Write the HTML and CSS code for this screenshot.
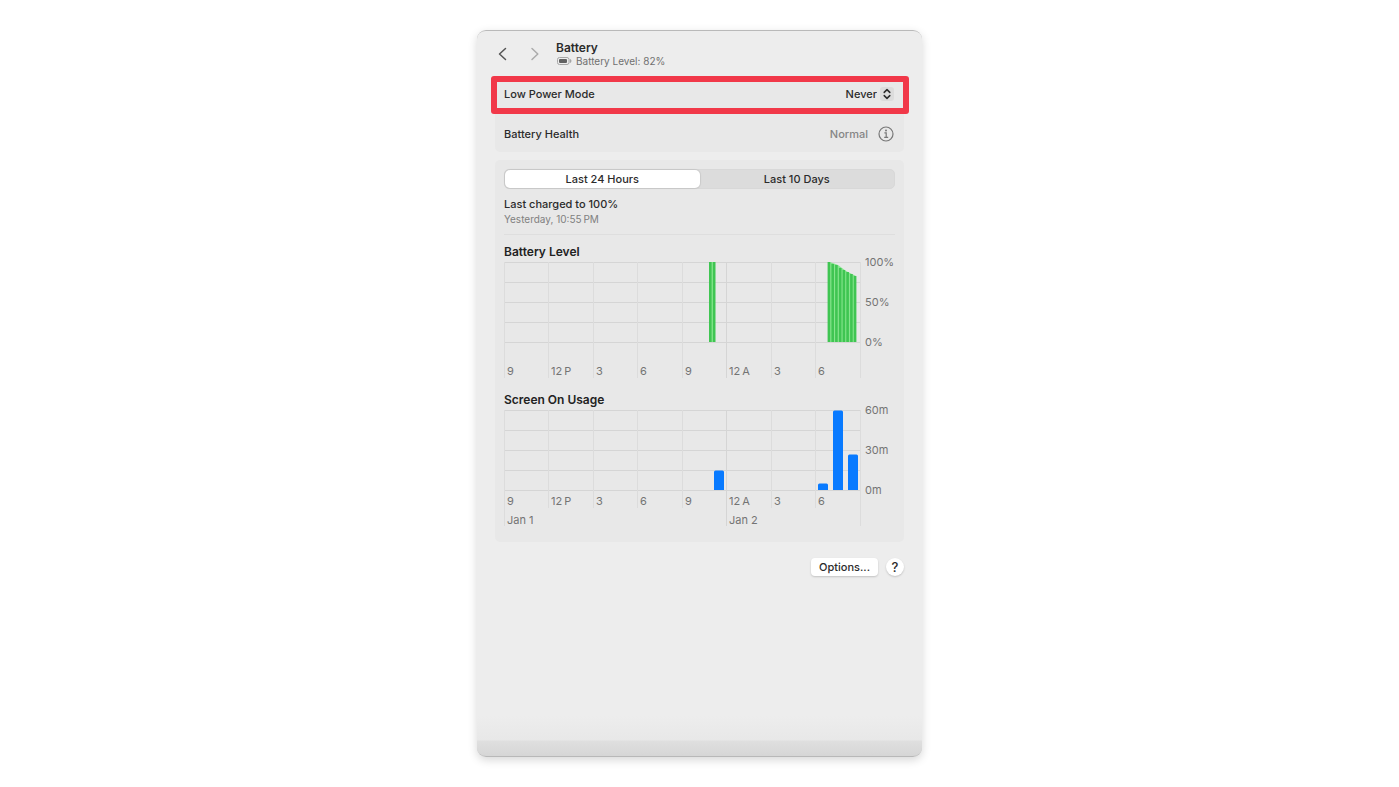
FILE: index.html
```html
<!DOCTYPE html>
<html lang="en">
<head>
<meta charset="utf-8">
<meta name="viewport" content="width=device-width, initial-scale=1">
<title>Battery</title>
<link rel="stylesheet" href="styles.css">
</head>
<body>
<main class="window">
  <header class="header">
    <button class="nav" type="button" aria-label="Back"><svg width="10" height="14" viewBox="0 0 10 14"><path d="M7.500 1.500 1.500 7 7.500 12.500"/></svg></button>
    <button class="nav nav-off" type="button" aria-label="Forward" disabled><svg width="10" height="14" viewBox="0 0 10 14"><path d="M2 1.5 7.8 7 2 12.5"/></svg></button>
    <div class="heading">
      <h1 class="title">Battery</h1>
      <p class="status">
        <svg width="15" height="8" viewBox="0 0 15 8" aria-hidden="true"><rect x=".5" y=".5" width="11.5" height="7" rx="2" fill="none" stroke="#a6a6a6"/><rect x="2" y="2" width="8" height="4" rx="1" fill="#626262"/><path d="M12.800 1.800c2.200.8 2.200 3.600 0 4.400z" fill="#a6a6a6"/></svg>
        <span>Battery Level: 82%</span>
      </p>
    </div>
  </header>

  <section class="card settings">
    <div class="row marked">
      <label for="mode">Low Power Mode</label>
      <span class="picker">
        <select id="mode" class="select"><option>Never</option><option>Always</option></select>
        <svg class="stepper" width="14" height="14" viewBox="0 0 14 14" aria-hidden="true"><rect width="14" height="14" rx="3"/><path d="M4.2 5.4 7 2.6l2.8 2.8M4.2 8.6 7 11.4l2.8-2.8"/></svg>
      </span>
    </div>
    <div class="row">
      <span>Battery Health</span>
      <span class="health">Normal
        <button class="info" type="button" aria-label="Battery health details"><svg width="16" height="16" viewBox="0 0 16 16"><circle cx="8" cy="8" r="7"/><path d="M6.4 6.9h1.8v4.3M6.2 11.3h4"/><circle class="dot" cx="8" cy="4.5" r="1"/></svg></button>
      </span>
    </div>
  </section>

  <section class="card usage">
    <div class="segments">
      <button class="segment segment-on" type="button">Last 24 Hours</button>
      <button class="segment" type="button">Last 10 Days</button>
    </div>
    <div class="charge">
      <p>Last charged to 100%</p>
      <p class="when">Yesterday, 10:55&#8239;PM</p>
    </div>

    <h2 class="chart-title">Battery Level</h2>
    <svg class="chart" viewBox="0 2 391 120" role="img" aria-label="Battery level over the last 24 hours">
      <path class="grid" d="M0 5.5h357M0 25.5h357M0 45.5h357M0 65.5h357M0 85.5h357"/>
      <path class="grid" d="M222.5 5v116"/>
      <path class="grid faint" d="M.5 5v116M44.5 5v116M89.5 5v116M133.5 5v116M178.5 5v116M267.5 5v116M311.5 5v116M356.5 5v116"/>
      <path class="level-back" d="M205 5h6v80h-6zM324 5h2l8 3 8 6 10 5v66h-28z"/>
      <path class="level" d="M205 5h2.6v80H205zM208.9 5h2.6v80h-2.6zM323.6 5h2.6v80h-2.6zM327.4 7h2.6v78h-2.6zM331.1 8h2.6v77h-2.6zM334.9 11h2.6v74h-2.6zM338.6 13h2.6v72h-2.6zM342.3 15h2.6v70h-2.6zM346.1 17h2.6v68h-2.6zM349.8 19h2.6v66h-2.6z"/>
      <g class="axis">
        <text x="361" y="9">100%</text><text x="361" y="49">50%</text><text x="361" y="89">0%</text>
        <text x="3" y="118">9</text><text x="47" y="118">12&#8239;P</text><text x="92" y="118">3</text><text x="136" y="118">6</text><text x="181" y="118">9</text><text x="225" y="118">12&#8239;A</text><text x="270" y="118">3</text><text x="314" y="118">6</text>
      </g>
    </svg>

    <h2 class="chart-title">Screen On Usage</h2>
    <svg class="chart" viewBox="0 2 391 120" role="img" aria-label="Screen on usage over the last 24 hours">
      <path class="grid" d="M0 5.5h357M0 25.5h357M0 45.5h357M0 65.5h357M0 85.5h357"/>
      <path class="grid" d="M222.5 5v116"/>
      <path class="grid faint" d="M.5 5v116M44.5 5v98M89.5 5v98M133.5 5v98M178.5 5v98M267.5 5v98M311.5 5v98M356.5 5v116"/>
      <path class="screen" d="M210 85V67q0-1.500 1.500-1.500h7q1.500 0 1.500 1.500v18zM314 85v-5q0-1.500 1.500-1.500h7q1.500 0 1.500 1.500v5zM329 85V7q0-1.500 1.500-1.500h7q1.500 0 1.500 1.500v78zM344 85V51q0-1.500 1.500-1.500h7q1.500 0 1.500 1.500v34z"/>
      <g class="axis">
        <text x="361" y="9">60m</text><text x="361" y="49">30m</text><text x="361" y="89">0m</text>
        <text x="3" y="100">9</text><text x="47" y="100">12&#8239;P</text><text x="92" y="100">3</text><text x="136" y="100">6</text><text x="181" y="100">9</text><text x="225" y="100">12&#8239;A</text><text x="270" y="100">3</text><text x="314" y="100">6</text>
        <text x="3" y="119">Jan 1</text><text x="225" y="119">Jan 2</text>
      </g>
    </svg>
  </section>

  <footer class="footer">
    <button class="options" type="button">Options...</button>
    <button class="help" type="button" aria-label="Help">?</button>
  </footer>
</main>
</body>
</html>
```
FILE: styles.css
```css
* { box-sizing: border-box; }

body {
  margin: 0;
  min-height: 100vh;
  padding: 30px 16px;
  display: flex;
  justify-content: center;
  background: #fff;
  color: #2b2b2b;
  font: 500 11px/14px Inter, "Liberation Sans", sans-serif;
}

h1, h2, p { margin: 0; }
button, select {
  padding: 0;
  border: 0;
  background: none;
  color: inherit;
  font: inherit;
}

.window {
  width: 100%;
  max-width: 445px;
  padding: 0 18px 16px;
  border-top: 1px solid #b9b9b9;
  border-bottom: 1px solid #b8b8b8;
  border-radius: 9px;
  background: linear-gradient(to top, #d6d6d6, #dfdfdf 15px, #e8e8e8 16px, #ededed 40px);
  box-shadow: 0 3px 10px rgba(0, 0, 0, .16);
}

.header {
  display: flex;
  align-items: center;
  gap: 22px;
  height: 45px;
  padding-left: 3px;
}
.nav {
  display: flex;
  fill: none;
  stroke: #555;
  stroke-width: 1.5;
  stroke-linecap: round;
  stroke-linejoin: round;
}
.nav-off { stroke: #ababab; }
.heading { margin-left: -6px; }
.title { font-size: 12px; line-height: 14px; font-weight: 600; }
.status {
  display: flex;
  align-items: center;
  gap: 4px;
  padding-left: 1px;
  color: #707070;
  font-size: 10px;
  font-weight: 400;
  line-height: 12px;
}

.card { border-radius: 5px; background: #e8e8e8; }

.row {
  display: flex;
  align-items: center;
  justify-content: space-between;
  height: 38px;
  padding: 2px 10px 0 9px;
}
.marked {
  margin: 0 -5px 0 -4px;
  padding: 0 9px 2px 7px;
  border: 6px solid #f13849;
  border-radius: 3px;
}
.picker { display: flex; align-items: center; gap: 3px; }
.select { appearance: none; text-align: right; text-align-last: right; }
.stepper rect { fill: #dcdcdc; }
.stepper path { fill: none; stroke: #2b2b2b; stroke-width: 1.5; stroke-linecap: round; stroke-linejoin: round; }
.health { display: flex; align-items: center; gap: 10px; color: #858585; }
.info { display: flex; fill: none; stroke: #777; stroke-width: 1.2; }
.info .dot { fill: #777; stroke: none; }

.usage { margin-top: 8px; padding: 9px 9px 15px; }
.segments {
  display: grid;
  grid-template-columns: 1fr 1fr;
  height: 20px;
  border: 1px solid #d8d8d8;
  border-radius: 5px;
  background: #dcdcdc;
}
.segment { border-radius: 5px; }
.segment-on { background: #fff; box-shadow: 0 0 1px 1px rgba(0, 0, 0, .08); }
.charge {
  margin-bottom: 10px;
  padding: 8px 0;
  border-bottom: 1px solid #dedede;
}
.when { margin-top: 1px; color: #808080; font-size: 10px; font-weight: 400; }
.chart-title { color: #222; font-size: 12px; line-height: 14px; font-weight: 600; }
.chart { display: block; width: 100%; margin-bottom: 14px; overflow: visible; }
.chart:last-child { margin-bottom: 0; }
.grid { fill: none; stroke: #d5d5d5; }
.faint { stroke: #dcdcdc; }
.level-back { fill: #86e58d; }
.level { fill: #3fc552; }
.screen { fill: #087aff; }
.axis { fill: #747474; font-size: 11px; font-weight: 400; }

.footer {
  display: flex;
  align-items: center;
  justify-content: flex-end;
  gap: 8px;
  padding-top: 16px;
}
.options, .help {
  height: 18px;
  background: #fff;
  box-shadow: 0 1px 2px rgba(0, 0, 0, .18);
  line-height: 18px;
}
.options { padding: 0 8px; border-radius: 4px; }
.help { width: 18px; border-radius: 50%; font-size: 13px; }
```
